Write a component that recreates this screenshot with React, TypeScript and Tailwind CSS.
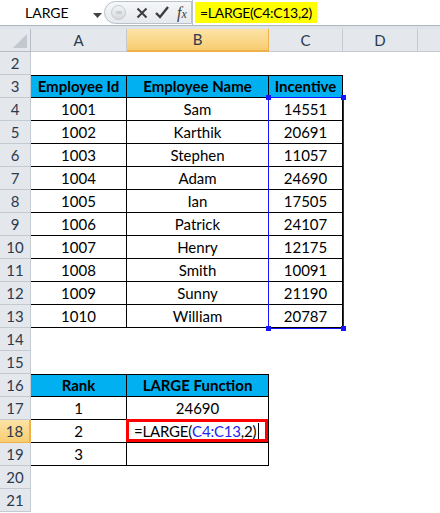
import React from "react";

type Row = { n: number; a?: string; b?: React.ReactNode; c?: string };

const rows: Row[] = [
  { n: 2 },
  { n: 3, a: "Employee Id", b: "Employee Name", c: "Incentive" },
  { n: 4, a: "1001", b: "Sam", c: "14551" },
  { n: 5, a: "1002", b: "Karthik", c: "20691" },
  { n: 6, a: "1003", b: "Stephen", c: "11057" },
  { n: 7, a: "1004", b: "Adam", c: "24690" },
  { n: 8, a: "1005", b: "Ian", c: "17505" },
  { n: 9, a: "1006", b: "Patrick", c: "24107" },
  { n: 10, a: "1007", b: "Henry", c: "12175" },
  { n: 11, a: "1008", b: "Smith", c: "10091" },
  { n: 12, a: "1009", b: "Sunny", c: "21190" },
  { n: 13, a: "1010", b: "William", c: "20787" },
  { n: 14 },
  { n: 15 },
  { n: 16, a: "Rank", b: "LARGE Function" },
  { n: 17, a: "1", b: "24690" },
  { n: 18, a: "2" },
  { n: 19, a: "3", b: "" },
  { n: 20 },
  { n: 21 },
];

const widths = ["w-[96px]", "w-[142px]", "w-[74px]", "w-[75px]"];

function inTable(n: number, col: number) {
  if (n >= 3 && n <= 13 && col <= 2) return true;
  if (n >= 16 && n <= 19 && col <= 1) return true;
  return false;
}

function isHead(n: number) {
  return n === 3 || n === 16;
}

function cellClass(n: number, col: number) {
  let cls = "h-full shrink-0 flex items-center justify-center " + widths[col];
  if (inTable(n, col)) {
    cls += " border-r border-b border-black";
    if (n === 3 || n === 16) cls += " border-t";
    if (isHead(n)) cls += " bg-[#00B0F0] font-bold";
  }
  return cls;
}

function FormulaBar() {
  return (
    <div className="h-[29px] flex flex-col bg-[#DEE3E9]">
      <div className="h-[26px] flex bg-white border-b border-[#AEB6C0]">
        <div className="w-[104px] shrink-0 flex items-center relative">
          <span className="pl-[25px] text-[14px]">LARGE</span>
          <svg className="absolute left-[93px] top-[13px]" width="9" height="5" viewBox="0 0 9 5">
            <path d="M0 0h9L4.5 5z" fill="#444" />
          </svg>
        </div>
        <div className="w-[88px] shrink-0 flex items-center bg-gradient-to-b from-[#F4F6F8] to-[#E6E9ED] border border-[#B9C1CB] rounded-l-[12px] my-px">
          <div className="ml-[6px] w-[15px] h-[15px] rounded-full bg-gradient-to-b from-[#F2F3F5] to-[#D5D9DE] border border-[#C5CAD0] flex items-center justify-center">
            <div className="w-[6px] h-[3px] rounded-full bg-[#C9CDD2]" />
          </div>
          <svg className="ml-[10px]" width="12" height="12" viewBox="0 0 12 12">
            <path d="M1.5 1.5l9 9M10.5 1.5l-9 9" stroke="#3D3D3D" strokeWidth="2" />
          </svg>
          <svg className="ml-[7px]" width="14" height="13" viewBox="0 0 14 13">
            <path d="M1 7l4 4 8-10" stroke="#3D3D3D" strokeWidth="2.4" fill="none" />
          </svg>
          <span className="ml-[8px] text-[16px] italic text-[#3D3D3D] font-['Liberation_Serif',serif] leading-none">
            f<span className="text-[12px]">x</span>
          </span>
        </div>
        <div className="flex-1 flex items-center pl-[2px] border-l border-[#B9C1CB]">
          <div className="h-[21px] bg-[#FFFF00] flex items-center px-[5px] text-[14px] tracking-[-0.3px]">
            =LARGE(C4:C13,2)
          </div>
        </div>
      </div>
    </div>
  );
}

function ColumnHeader() {
  const letters = ["A", "B", "C", "D"];
  return (
    <div className="flex h-[23px] text-[#2C3A4E]">
      <div className="w-[31px] shrink-0 h-full bg-[#E4E8ED] border-r border-b border-[#B6BDC7] relative">
        <svg className="absolute right-[3px] bottom-[3px]" width="14" height="14" viewBox="0 0 14 14">
          <path d="M14 0v14H0z" fill="#C3C8CE" />
        </svg>
      </div>
      {letters.map((l, i) => (
        <div
          key={l}
          className={
            "h-full shrink-0 flex items-center justify-center " +
            widths[i] +
            (l === "B"
              ? " bg-gradient-to-b from-[#FCE3A6] to-[#F8CD70] border-r border-b-2 border-[#F0B04A]"
              : " bg-[#E4E8ED] border-r border-b border-[#C4CAD2]")
          }
        >
          {l}
        </div>
      ))}
      <div className="flex-1 h-full bg-[#E4E8ED] border-b border-[#C4CAD2]" />
    </div>
  );
}

export default function App() {
  return (
    <div className="w-[440px] h-[513px] overflow-hidden bg-white text-[15px] text-black font-['Lato','Open_Sans',sans-serif]">
      <FormulaBar />
      <div className="relative">
        <ColumnHeader />
        {rows.map((r) => (
          <div key={r.n} className="flex h-[23px]">
            <div
              className={
                r.n === 18
                  ? "w-[31px] shrink-0 h-full flex items-center justify-center bg-gradient-to-b from-[#FCE3A6] to-[#F8CD70] border-r-2 border-b border-[#F0B04A] text-[#2C3A4E]"
                  : "w-[31px] shrink-0 h-full flex items-center justify-center bg-[#E4E8ED] border-r border-b border-[#C4CAD2] text-[#2C3A4E]"
              }
            >
              {r.n}
            </div>
            <div className={cellClass(r.n, 0)}>{r.a}</div>
            {r.n === 18 ? (
              <div className={cellClass(r.n, 1) + " relative !justify-start pl-[7px] tracking-[-0.2px]"}>
                <span>=LARGE(</span>
                <span className="text-[#2424F0]">C4:C13</span>
                <span>,2)</span>
                <span className="inline-block w-px h-[17px] bg-black ml-[2px]" />
                <div className="absolute -left-px -top-px right-0 bottom-0 border-[3px] border-[#FF0000]" />
              </div>
            ) : (
              <div className={cellClass(r.n, 1)}>{r.b}</div>
            )}
            <div className={cellClass(r.n, 2)}>{r.c}</div>
            <div className={cellClass(r.n, 3)} />
            <div className="flex-1" />
          </div>
        ))}
        <div className="absolute left-[268px] top-[68px] w-[76px] h-[232px] border border-[#1414FF] pointer-events-none">
          <div className="absolute -left-[3px] -top-[3px] w-[5px] h-[5px] bg-[#1414FF]" />
          <div className="absolute -right-[3px] -top-[3px] w-[5px] h-[5px] bg-[#1414FF]" />
          <div className="absolute -left-[3px] -bottom-[3px] w-[5px] h-[5px] bg-[#1414FF]" />
          <div className="absolute -right-[3px] -bottom-[3px] w-[5px] h-[5px] bg-[#1414FF]" />
        </div>
      </div>
    </div>
  );
}
